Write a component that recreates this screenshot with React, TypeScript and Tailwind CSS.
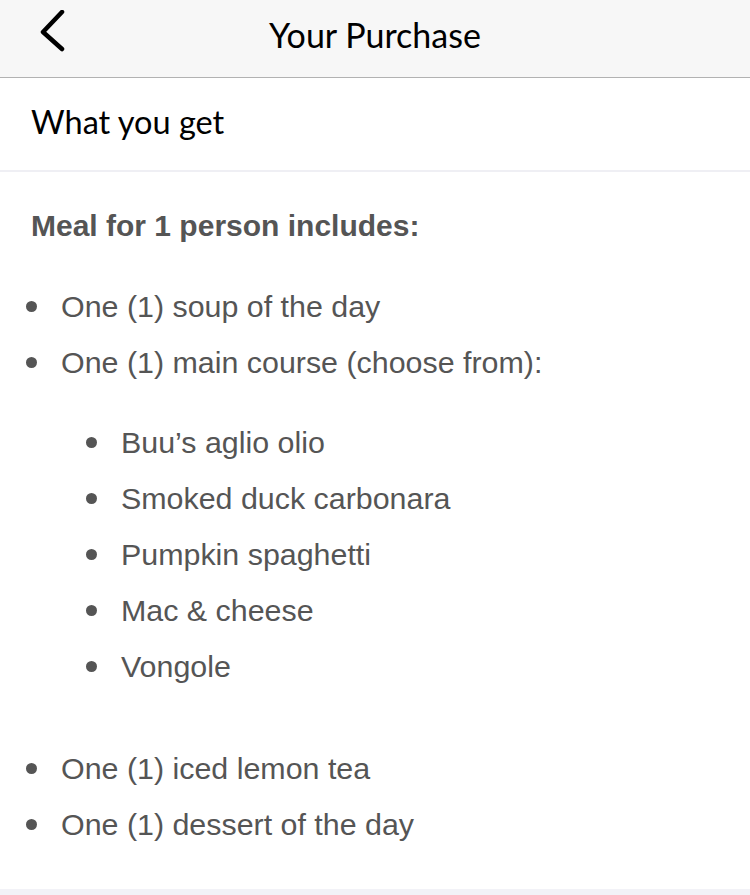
import React from "react";

const outer1 = ["One (1) soup of the day", "One (1) main course (choose from):"];
const inner = ["Buu’s aglio olio", "Smoked duck carbonara", "Pumpkin spaghetti", "Mac & cheese", "Vongole"];
const outer2 = ["One (1) iced lemon tea", "One (1) dessert of the day"];

function Item({ text, nested }: { text: string; nested?: boolean }) {
  return (
    <li className={`flex items-center h-[56px] ${nested ? "pl-[86px]" : "pl-[26px]"}`}>
      <span className="w-[11px] h-[11px] rounded-full bg-[#555555] shrink-0" />
      <span className="ml-[24px] text-[30.4px] text-[#555555] leading-none">{text}</span>
    </li>
  );
}

export default function App() {
  return (
    <div className="w-[750px] h-[895px] bg-white flex flex-col overflow-hidden" style={{ fontFamily: '"Liberation Sans", Arial, sans-serif' }}>
      <header className="h-[78px] bg-[#f7f7f7] border-b border-[#b2b2b2] flex items-center relative shrink-0">
        <svg className="absolute left-[38px] top-[10px]" width="30" height="44" viewBox="0 0 30 44">
          <path d="M24 2 L5 22 L24 39" fill="none" stroke="#000" strokeWidth="4.5" strokeLinecap="round" strokeLinejoin="round" />
        </svg>
        <h1 className="w-full text-center text-[34px] text-black -mt-[9px]" style={{ fontFamily: 'Lato, "Noto Sans", sans-serif' }}>
          Your Purchase
        </h1>
      </header>
      <div className="h-[94px] flex items-center px-[31px] border-b-2 border-[#efeff4] shrink-0">
        <span className="text-[32.5px] text-black -mt-[4px]" style={{ fontFamily: 'Lato, "Noto Sans", sans-serif' }}>What you get</span>
      </div>
      <div className="flex-1 flex flex-col">
        <div className="pl-[31px] pt-[39px] text-[30px] font-bold text-[#555555] leading-none h-[106px]">
          Meal for 1 person includes:
        </div>
        <ul className="flex flex-col">
          {outer1.map((t) => <Item key={t} text={t} />)}
        </ul>
        <ul className="flex flex-col mt-[24px]">
          {inner.map((t) => <Item key={t} text={t} nested />)}
        </ul>
        <ul className="flex flex-col mt-[46px]">
          {outer2.map((t) => <Item key={t} text={t} />)}
        </ul>
      </div>
      <div className="h-[6px] bg-[#f2f2f7] shrink-0" />
    </div>
  );
}
